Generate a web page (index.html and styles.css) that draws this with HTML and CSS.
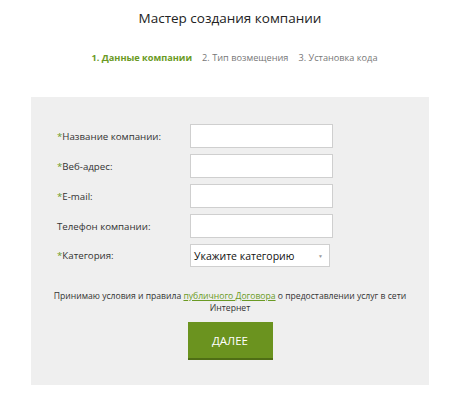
FILE: index.html
```html
<!DOCTYPE html>
<html lang="ru">
<head>
    <meta charset="UTF-8">
    <meta name="viewport" content="width=device-width, initial-scale=1.0">
    <title>Мастер создания компании</title>
    <link rel="stylesheet" href="styles.css">
</head>
<body>
    <div class="wizard">
        <h1 class="title">Мастер создания компании</h1>
        <div class="steps">
            <span class="step active">1. Данные компании</span>
            <span class="step">2. Тип возмещения</span>
            <span class="step">3. Установка кода</span>
        </div>

        <div class="panel">
            <div class="form">
                <label class="label"><span class="req">*</span>Название компании:</label>
                <input type="text" class="field">
                <label class="label"><span class="req">*</span>Веб-адрес:</label>
                <input type="text" class="field">
                <label class="label"><span class="req">*</span>E-mail:</label>
                <input type="text" class="field">
                <label class="label">Телефон компании:</label>
                <input type="text" class="field">
                <label class="label"><span class="req">*</span>Категория:</label>
                <div class="select">
                    <span>Укажите категорию</span>
                    <span class="arrow">▼</span>
                </div>
            </div>

            <p class="terms">Принимаю условия и правила <a href="#">публичного Договора</a> о предоставлении услуг в сети Интернет</p>

            <div class="actions">
                <button class="next">ДАЛЕЕ</button>
            </div>
        </div>
    </div>
</body>
</html>
```

FILE: styles.css
```css
body {
    margin: 0;
    font-family: "Open Sans", Arial, sans-serif;
    color: #333;
    background: #fff;
}
.wizard {
    width: 398px;
    margin: 0 0 0 31px;
}
.title {
    margin: 9px 0 0;
    font-size: 13.5px;
    font-weight: normal;
    line-height: 18px;
    text-align: center;
    color: #222;
}
.steps {
    display: flex;
    justify-content: center;
    gap: 10px;
    margin-top: 24px;
    padding-left: 9px;
    font-size: 9.2px;
    line-height: 14px;
    color: #777;
}
.step.active {
    color: #6a9a24;
    font-weight: bold;
}
.panel {
    margin-top: 32px;
    background: #efefef;
    padding: 27px 20px 25px 26px;
    height: 236px;
}
.form {
    display: grid;
    grid-template-columns: 133px 143px;
    row-gap: 6px;
    align-items: center;
}
.label {
    font-size: 9.7px;
    color: #333;
}
.req {
    color: #6a9a24;
}
.field {
    box-sizing: border-box;
    width: 143px;
    height: 24px;
    margin: 0;
    border: 1px solid #cfcfcf;
    background: #fff;
}
.select {
    box-sizing: border-box;
    width: 140px;
    height: 23px;
    display: flex;
    align-items: center;
    justify-content: space-between;
    padding: 0 6px 0 3px;
    border: 1px solid #cfcfcf;
    background: #fff;
    font-size: 10.5px;
    color: #111;
}
.arrow {
    font-size: 5px;
    color: #999;
}
.terms {
    margin: 23px -8px 0 -14px;
    font-size: 8.6px;
    line-height: 12px;
    text-align: center;
    color: #333;
}
.terms a {
    color: #6a9a24;
}
.actions {
    display: flex;
    justify-content: center;
    margin: 8px 0 0 -6px;
}
.next {
    width: 85px;
    height: 38px;
    border: none;
    border-bottom: 2px solid #4f6e15;
    background: #6b931f;
    color: #fff;
    font-family: "Open Sans", Arial, sans-serif;
    font-size: 11.5px;
    cursor: pointer;
}
```
